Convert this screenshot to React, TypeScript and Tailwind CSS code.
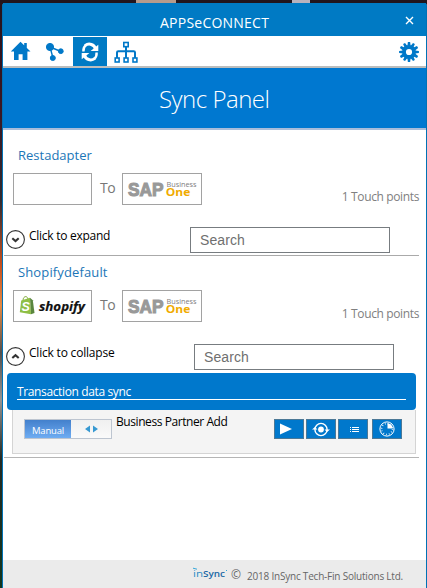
import type { ReactNode } from "react";

function HomeIcon() {
  return (
    <svg className="h-[20px] w-[22px]" viewBox="0 0 22 20" fill="#0078c8">
      <path d="M10.5 0.8L20.5 10.4H17.4V19H12.6V13.2H8.6V19H4V10.4H0.8L10.5 0.8ZM14.2 2H16.8V7L14.2 4.5Z" />
    </svg>
  );
}

function NodesIcon() {
  return (
    <svg className="h-[20px] w-[20px]" viewBox="0 0 20 20" fill="#0078c8" stroke="#0078c8">
      <path d="M5 5L16 9.5M5 5L8 16" fill="none" strokeWidth="1.4" />
      <circle cx="5" cy="5" r="3.6" />
      <circle cx="15.8" cy="9.2" r="2.4" />
      <circle cx="7.8" cy="16" r="2.5" />
    </svg>
  );
}

function SyncIcon() {
  return (
    <svg className="h-[20px] w-[20px]" viewBox="0 0 20 20" fill="none" stroke="#fff" strokeWidth="3">
      <path d="M5 3.6C9 0.6 14.4 2.4 15.6 7M15 16.4C11 19.4 5.6 17.6 4.4 13" />
      <path d="M3.4 9.5C3.2 6.8 3.9 4.8 5.6 3.3M16.6 10.5C16.8 13.2 16.1 15.2 14.4 16.7" strokeWidth="2.4" />
      <path d="M18.3 2.8V9H10.6ZM1.7 17.2V11H9.4Z" fill="#fff" stroke="none" />
    </svg>
  );
}

function TreeIcon() {
  return (
    <svg className="h-[23px] w-[24px]" viewBox="0 0 24 23" fill="none" stroke="#0078c8" strokeWidth="1.6">
      <rect x="9.8" y="1.5" width="4.4" height="4.2" />
      <path d="M12 6V17M3 17V11.5Q3 10.2 4.3 10.2H19.7Q21 10.2 21 11.5V17" strokeWidth="2" />
      <rect x="1.2" y="17" width="3.9" height="4" />
      <rect x="10.1" y="17" width="3.9" height="4" />
      <rect x="19" y="17" width="3.9" height="4" />
    </svg>
  );
}

const TEETH = [0, 30, 60, 90, 120, 150, 180, 210, 240, 270, 300, 330];

function GearIcon() {
  return (
    <svg className="h-[20px] w-[20px]" viewBox="-10 -10 20 20" fill="#0078c8">
      {TEETH.map((a) => (
        <path key={a} d="M-1.6 -6L-1.1 -9.9H1.1L1.6 -6Z" transform={`rotate(${a})`} />
      ))}
      <circle r="5" fill="none" stroke="#0078c8" strokeWidth="3.8" />
    </svg>
  );
}

function SapLogo() {
  return (
    <svg className="h-[30px] w-[78px]" viewBox="0 0 78 30">
      <text x="5" y="21.7" fontFamily="'Liberation Sans', sans-serif" fontWeight="700" fontSize="19" fill="#999" stroke="#999" strokeWidth="1.1" textLength="35.5" lengthAdjust="spacingAndGlyphs">SAP</text>
      <text x="43.5" y="12.7" fontFamily="'Open Sans', sans-serif" fontSize="6.8" fill="#808080" textLength="30" lengthAdjust="spacingAndGlyphs">Business</text>
      <text x="42.8" y="22" fontFamily="'Open Sans', sans-serif" fontWeight="700" fontSize="10.6" fill="#f0ab00" textLength="24.5" lengthAdjust="spacingAndGlyphs">One</text>
    </svg>
  );
}

function ShopifyLogo() {
  return (
    <svg className="h-[30px] w-[77px]" viewBox="0 0 77 30">
      <path d="M9 9.5C9 5 13.5 4 14 8.5" fill="none" stroke="#7fa83c" strokeWidth="1" />
      <path d="M7.2 9.5L16 6.7L17 23.3L5.8 21.3Z" fill="#8fbf45" />
      <path d="M16 6.7L18.8 9.3L20.5 22.1L17 23.3Z" fill="#5a863e" />
      <text x="7.5" y="19.8" fontFamily="'Liberation Sans', sans-serif" fontWeight="700" fontStyle="italic" fontSize="12.5" fill="#fff">S</text>
      <text x="25" y="19.5" fontFamily="'Open Sans', sans-serif" fontWeight="700" fontStyle="italic" fontSize="13" fill="#111" stroke="#111" strokeWidth="0.2" textLength="46" lengthAdjust="spacingAndGlyphs">shopify</text>
    </svg>
  );
}

function Chevron({ open }: { open: boolean }) {
  return (
    <svg className="h-[20px] w-[20px]" viewBox="0 0 20 20" fill="none" stroke="#333">
      <circle cx="10.5" cy="10.5" r="8.9" strokeWidth="1.1" />
      <path d={open ? "M7.3 12L10.5 9.2L13.7 12" : "M7.3 9.2L10.5 12L13.7 9.2"} strokeWidth="2.1" />
    </svg>
  );
}

function Connection({ name, source, open, nameClass, labelClass, searchClass }: {
  name: string; source?: ReactNode; open: boolean; nameClass: string; labelClass: string; searchClass: string;
}) {
  return (
    <section>
      <h2 className={`ml-[15px] h-[18px] whitespace-nowrap text-[13px] leading-[18px] text-[#1c76b7] ${nameClass}`}>{name}</h2>
      <div className="mt-[9px] flex h-[32px] pl-[10px]">
        <div className="h-[32px] w-[79px] border border-[#a2a2a2]">{source}</div>
        <span className="ml-[8px] w-[22px] text-[14px] leading-[30px] tracking-[-0.5px] text-[#777]">To</span>
        <div className="h-[32px] w-[80px] border border-[#a2a2a2]"><SapLogo /></div>
        <span className="ml-auto mr-[7px] pt-[15px] text-[12px] leading-[18px] tracking-[-0.37px] text-[#808080]">1 Touch points</span>
      </div>
      <div className="mt-[22px] flex h-[28px] pl-[2px]">
        <span className="pt-[2px]"><Chevron open={open} /></span>
        <span className={`ml-[4px] whitespace-nowrap text-[12px] leading-[18px] text-black ${labelClass}`}>
          {open ? "Click to collapse" : "Click to expand"}
        </span>
        <div className={`ml-auto h-[26px] w-[200px] border border-[#777c80] pl-[9px] font-['Liberation_Sans',sans-serif] text-[14px] leading-[25px] tracking-[0.1px] text-[#6f6f6f] ${searchClass}`}>Search</div>
      </div>
    </section>
  );
}

function Action({ children }: { children: ReactNode }) {
  return (
    <button className="flex h-[20px] w-[30px] items-center justify-center border border-[#4c7896] bg-[#0078cc]">{children}</button>
  );
}

export default function App() {
  return (
    <div className="h-[588px] w-[427px] overflow-hidden bg-[linear-gradient(180deg,#25131b_0%,#3b1623_18%,#302b31_34%,#c6501e_45%,#e58a44_52%,#54504e_60%,#969391_68%,#242a24_78%,#12361e_100%)] pl-[2px] font-['Open_Sans','Noto_Sans',sans-serif]">
      <div className="flex h-[3px] bg-[#21151d]">
        <i className="ml-[134px] h-[3px] w-[40px] bg-[#b69b8c]" />
        <i className="ml-[116px] h-[3px] w-[18px] bg-[#b9b2bd]" />
      </div>
      <main className="flex h-[585px] flex-col rounded-t-[3px] border-x border-[#0072b5] bg-white">
        <header className="relative h-[33px] shrink-0 bg-[#007ac4] text-white">
          <h1 className="pl-[157px] pt-[10px] text-[14px] leading-[20px] tracking-[0.23px]">APPSeCONNECT</h1>
          <svg className="absolute right-[12px] top-[13px] h-[9px] w-[9px]" viewBox="0 0 9 9" stroke="#fff" strokeWidth="1.4"><path d="M1 1L8 8M8 1L1 8" /></svg>
        </header>
        <nav className="flex h-[32px] shrink-0 items-start border-b-2 border-[#bbbdbd]">
          <span className="ml-[7px] mt-[5px]"><HomeIcon /></span>
          <span className="ml-[13px] mt-[6px]"><NodesIcon /></span>
          <span className="ml-[8px] mt-[1px] flex h-[29px] w-[34px] items-center justify-center bg-[#007ac4]"><SyncIcon /></span>
          <span className="ml-[7px] mt-[5px]"><TreeIcon /></span>
          <span className="ml-auto mr-[7px] mt-[6px]"><GearIcon /></span>
        </nav>
        <div className="h-[62px] shrink-0 border-b-2 border-[#a9bdda] bg-[#0078d0] pl-[156px] pt-[15px] text-[24px] font-light leading-[32px] tracking-[-0.5px] text-white">Sync Panel</div>
        <div className="h-[430px] shrink-0 pt-[16px]">
          <Connection name="Restadapter" open={false} nameClass="" labelClass="tracking-[-0.27px]" searchClass="mr-[36px]" />
          <div className="ml-px mr-[7px] h-px bg-[#aaa]" />
          <div className="h-[7px]" />
          <Connection name="Shopifydefault" source={<ShopifyLogo />} open nameClass="tracking-[0.13px]" labelClass="tracking-[-0.2px]" searchClass="mr-[32px]" />
          <div className="ml-[4px] mt-px h-[37px] w-[409px] rounded-[4px] bg-[#0078cc] px-[10px] pt-[10px]">
            <div className="h-[17px] border-b border-white text-[12px] leading-[18px] tracking-[-0.37px] text-white">Transaction data sync</div>
          </div>
          <div className="ml-[9px] flex h-[44px] w-[404px] border border-t-0 border-[#d4d4d4] bg-[#f4f4f4] pl-[11px] pt-[9px]">
            <div className="flex h-[20px] w-[88px] border border-[#bdc5d0] bg-gradient-to-b from-[#f0f0f0] to-[#fafafa]">
              <span className="h-[18px] w-[46px] bg-gradient-to-b from-[#4380cc] to-[#6eacf2] text-center text-[9.5px] leading-[21px] tracking-[-0.2px] text-white">Manual</span>
              <svg className="ml-[13px] mt-[5px] h-[8px] w-[15px]" viewBox="0 0 15 8" fill="#3799d2"><path d="M6 0.5V7.5L1 4ZM9 0.5V7.5L14 4Z" /></svg>
            </div>
            <span className="ml-[4px] mt-[-6px] whitespace-nowrap text-[12px] leading-[18px] tracking-[-0.43px] text-black">Business Partner Add</span>
            <div className="ml-auto mr-[13px] flex gap-[2px]">
              <Action><svg className="mr-[7px] h-[12px] w-[12px]" viewBox="0 0 12 12" fill="#fff"><path d="M0 0.5L12 6L0 11.5Z" /></svg></Action>
              <Action><svg className="h-[16px] w-[18px]" viewBox="0 0 18 16" fill="none" stroke="#fff"><circle cx="9" cy="8.5" r="6.1" strokeWidth="1.4" /><circle cx="9" cy="8.5" r="2.9" fill="#fff" stroke="none" /><path d="M0 8.5L3 6L5.5 8.5ZM18 8.5L15 11L12.5 8.5Z" fill="#fff" stroke="none" /></svg></Action>
              <Action><svg className="ml-[2px] h-[7px] w-[9px]" viewBox="0 0 9 7" stroke="#fff"><path d="M0 1.5H1M2 1.5H9M0 3.5H1M2 3.5H9M0 5.5H1M2 5.5H9" /></svg></Action>
              <span className="ml-[2px]"><Action><svg className="h-[16px] w-[16px]" viewBox="0 0 16 16" fill="none" stroke="#fff"><circle cx="8" cy="8" r="7.1" strokeWidth="1" /><circle cx="8" cy="8" r="5.4" strokeWidth="1.5" strokeDasharray="0.7 2.13" /><path d="M8.5 7.5V2.3A5.2 5.2 0 0 1 13.7 7.5Z" fill="#fff" stroke="none" /></svg></Action></span>
            </div>
          </div>
          <div className="ml-px mr-[7px] mt-[3px] h-px bg-[#b5b5b5]" />
        </div>
        <footer className="flex h-[28px] shrink-0 items-center bg-[#ebebeb] pl-[190px] text-[10px] text-[#666]">
          <svg className="h-[18px] w-[36px]" viewBox="0 0 36 18">
            <text x="0" y="12" fontFamily="'Open Sans', sans-serif" fontSize="9.5" fill="#2a8cc5" textLength="10" lengthAdjust="spacingAndGlyphs">in</text>
            <text x="10" y="12" fontFamily="'Open Sans', sans-serif" fontWeight="600" fontSize="9" fill="#2068a4" textLength="22" lengthAdjust="spacingAndGlyphs">Sync</text>
            <path d="M0 3.2L4 4.2M33 5.5H34" stroke="#35a6d8" fill="none" />
          </svg>
          <span className="ml-[2px] mt-[2px] text-[12px]">©</span>
          <span className="ml-[6px] mt-[4px] whitespace-nowrap tracking-[-0.21px]">2018 InSync Tech-Fin Solutions Ltd.</span>
        </footer>
      </main>
    </div>
  );
}
